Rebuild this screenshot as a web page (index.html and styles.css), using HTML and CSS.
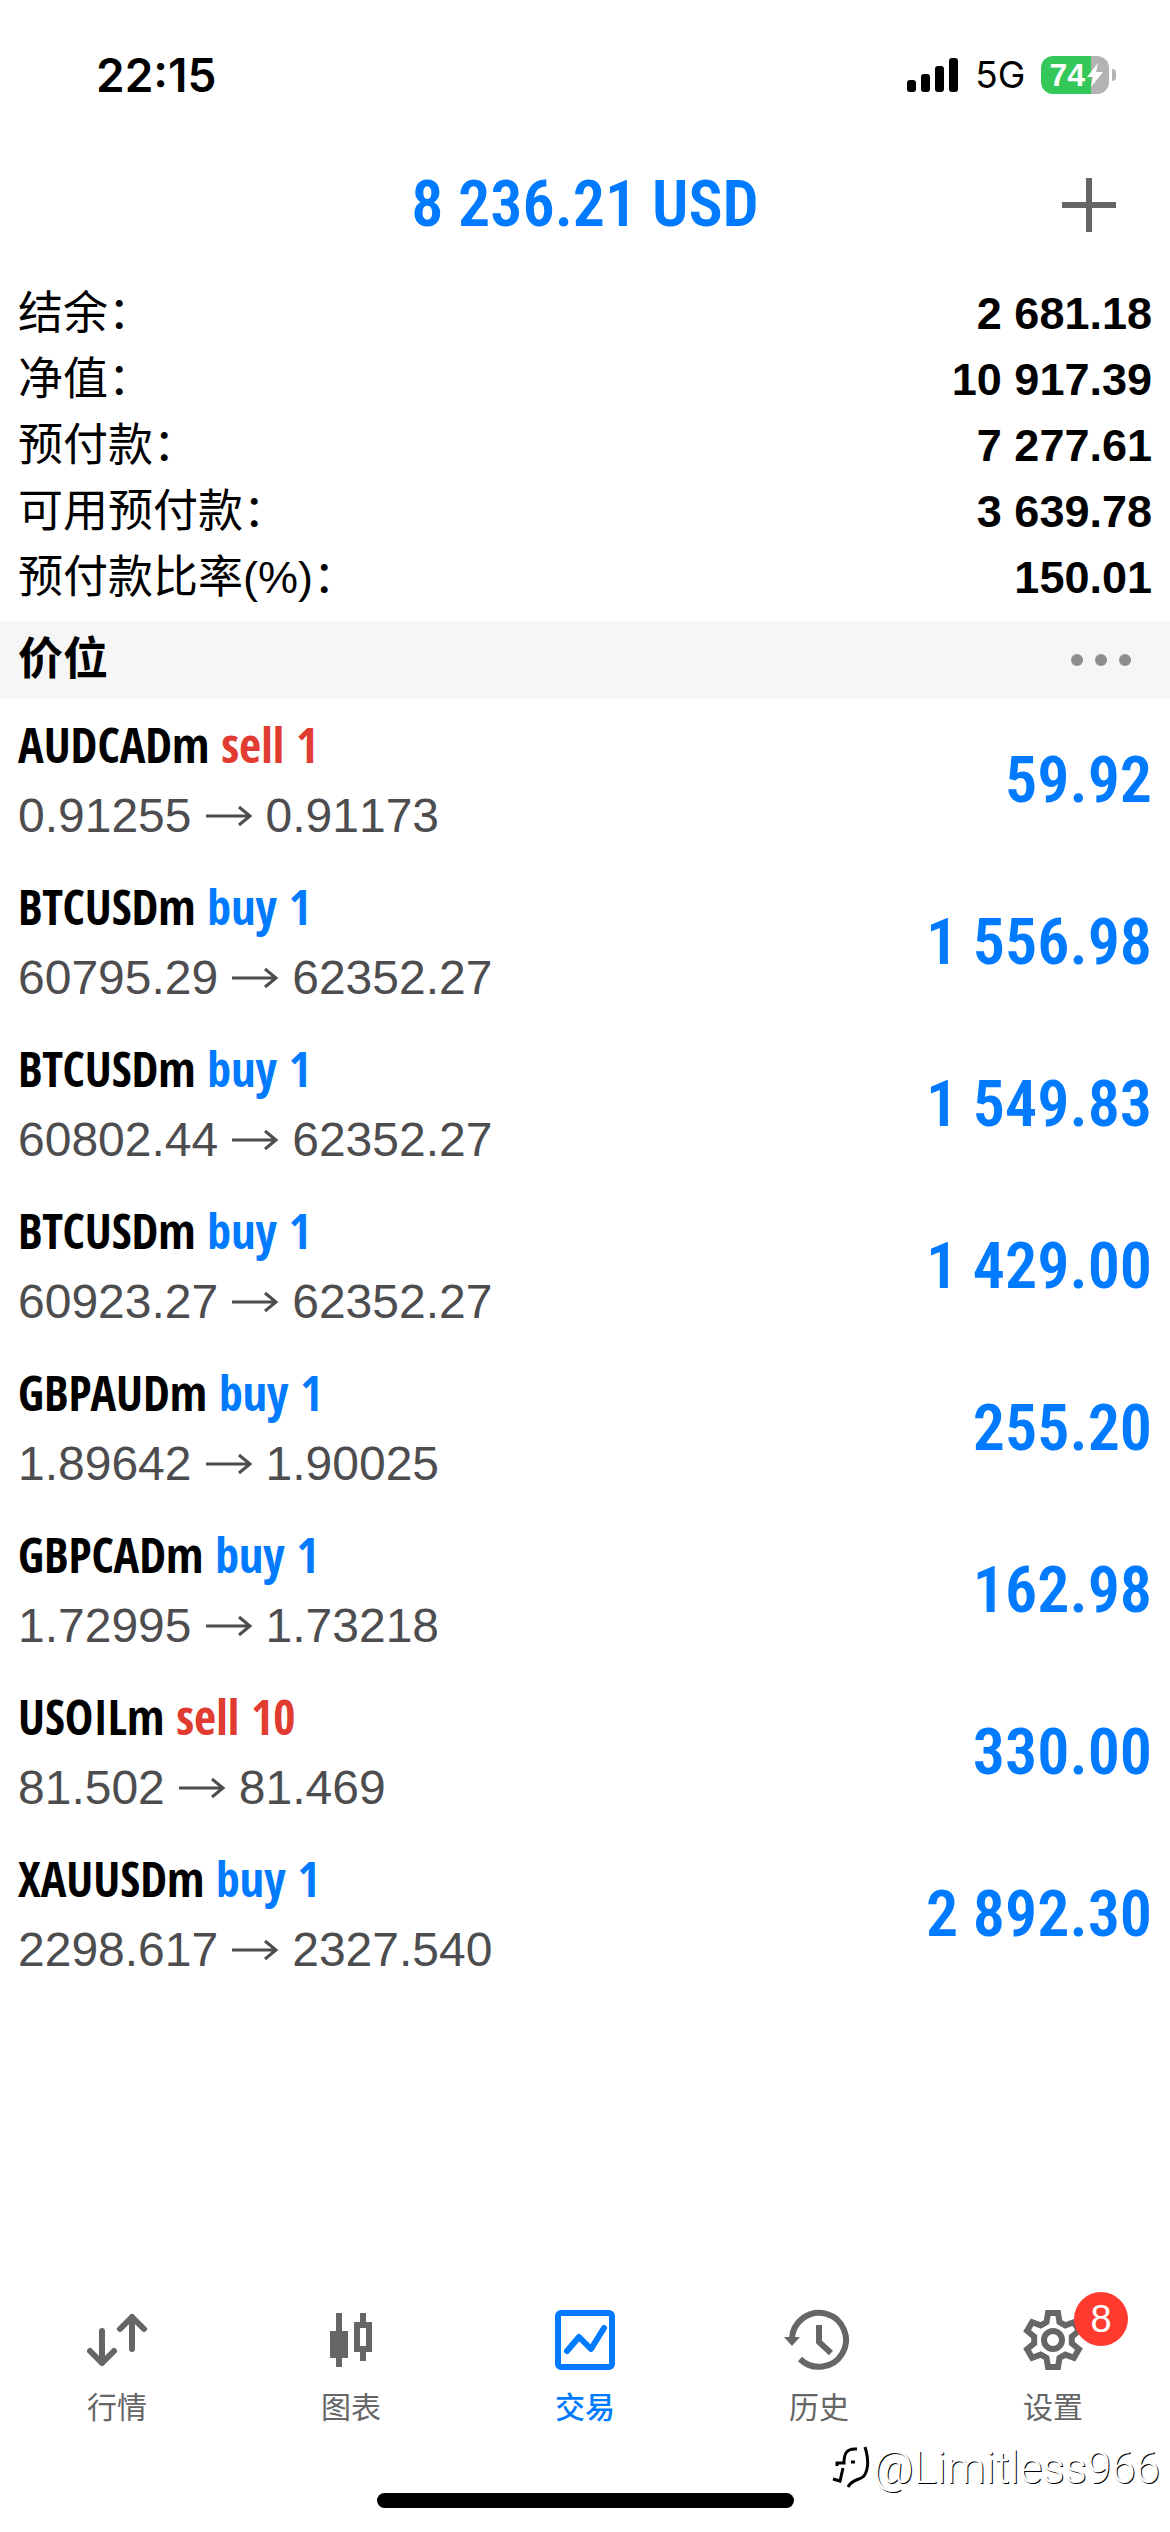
FILE: index.html
```html
<!DOCTYPE html>
<html lang="zh-CN">
<head>
<meta charset="utf-8">
<meta name="viewport" content="width=device-width">
<title>交易</title>
<link rel="stylesheet" href="styles.css">
</head>
<body>
<div class="page">
  <div class="status">
    <time class="clock">22:15</time>
    <div class="status-right">
      <svg class="signal" viewBox="0 0 52 34" aria-hidden="true"><rect x="0" y="22" width="9" height="12" rx="3"/><rect x="14" y="16" width="9" height="18" rx="3"/><rect x="28" y="8" width="9" height="26" rx="3"/><rect x="42" y="0" width="9" height="34" rx="3"/></svg>
      <span class="network">5G</span>
      <span class="battery"><span class="battery-body">74<svg class="bolt" viewBox="0 0 16 24" aria-hidden="true"><path d="M11 0 0 14h6L4 24 16 9H9z"/></svg></span><span class="battery-nub"></span></span>
    </div>
  </div>

  <header class="header">
    <h1 class="total">8 236.21 USD</h1>
    <button class="add" type="button" aria-label="新订单"><svg class="add-icon" viewBox="0 0 54 54"><path d="M27 0v54M0 27h54"/></svg></button>
  </header>

  <main class="main">
    <dl class="summary">
      <div class="summary-row"><dt>结余：</dt><dd>2 681.18</dd></div>
      <div class="summary-row"><dt>净值：</dt><dd>10 917.39</dd></div>
      <div class="summary-row"><dt>预付款：</dt><dd>7 277.61</dd></div>
      <div class="summary-row"><dt>可用预付款：</dt><dd>3 639.78</dd></div>
      <div class="summary-row"><dt>预付款比率(%)：</dt><dd>150.01</dd></div>
    </dl>

    <div class="section">
      <h2 class="section-title">价位</h2>
      <button class="more" type="button" aria-label="更多"><span class="dot"></span><span class="dot"></span><span class="dot"></span></button>
    </div>

    <ul class="positions">
      <li class="position"><div><div class="symbol">AUDCADm <span class="sell">sell 1</span></div><div class="prices">0.91255 <svg class="arrow" viewBox="0 0 48 34"><path d="M1 17h44M34 8l11 9-11 9"/></svg> 0.91173</div></div><div class="profit">59.92</div></li>
      <li class="position"><div><div class="symbol">BTCUSDm <span class="buy">buy 1</span></div><div class="prices">60795.29 <svg class="arrow" viewBox="0 0 48 34"><path d="M1 17h44M34 8l11 9-11 9"/></svg> 62352.27</div></div><div class="profit">1 556.98</div></li>
      <li class="position"><div><div class="symbol">BTCUSDm <span class="buy">buy 1</span></div><div class="prices">60802.44 <svg class="arrow" viewBox="0 0 48 34"><path d="M1 17h44M34 8l11 9-11 9"/></svg> 62352.27</div></div><div class="profit">1 549.83</div></li>
      <li class="position"><div><div class="symbol">BTCUSDm <span class="buy">buy 1</span></div><div class="prices">60923.27 <svg class="arrow" viewBox="0 0 48 34"><path d="M1 17h44M34 8l11 9-11 9"/></svg> 62352.27</div></div><div class="profit">1 429.00</div></li>
      <li class="position"><div><div class="symbol">GBPAUDm <span class="buy">buy 1</span></div><div class="prices">1.89642 <svg class="arrow" viewBox="0 0 48 34"><path d="M1 17h44M34 8l11 9-11 9"/></svg> 1.90025</div></div><div class="profit">255.20</div></li>
      <li class="position"><div><div class="symbol">GBPCADm <span class="buy">buy 1</span></div><div class="prices">1.72995 <svg class="arrow" viewBox="0 0 48 34"><path d="M1 17h44M34 8l11 9-11 9"/></svg> 1.73218</div></div><div class="profit">162.98</div></li>
      <li class="position"><div><div class="symbol">USOILm <span class="sell">sell 10</span></div><div class="prices">81.502 <svg class="arrow" viewBox="0 0 48 34"><path d="M1 17h44M34 8l11 9-11 9"/></svg> 81.469</div></div><div class="profit">330.00</div></li>
      <li class="position"><div><div class="symbol">XAUUSDm <span class="buy">buy 1</span></div><div class="prices">2298.617 <svg class="arrow" viewBox="0 0 48 34"><path d="M1 17h44M34 8l11 9-11 9"/></svg> 2327.540</div></div><div class="profit">2 892.30</div></li>
    </ul>
  </main>

  <nav class="tabs">
    <a class="tab" href="#quotes">
      <svg class="tab-icon round" viewBox="-36 -30 72 60"><path d="M-15-9v32M-27 11l12 12 12-12M15 9v-32M3-11l12-12 12 12"/></svg>
      行情
    </a>
    <a class="tab" href="#charts">
      <svg class="tab-icon" viewBox="-36 -30 72 60"><path d="M-12-27v54M12-27v12M12 9v12M6-15h12V9H6z"/><path class="solid" d="M-21-9h18v27h-18z"/></svg>
      图表
    </a>
    <a class="tab active" href="#trade" aria-current="page">
      <svg class="tab-icon round" viewBox="-36 -30 72 60"><rect x="-27" y="-27" width="54" height="54" rx="3"/><path d="M-18 11-6-3 6 9l13-21"/></svg>
      交易
    </a>
    <a class="tab" href="#history">
      <svg class="tab-icon" viewBox="-36 -30 72 60"><path d="M-27-1A27 27 0 1 1-19 19M0-15V2L12 13"/><path class="solid" d="M-35-3h16l-8 9z"/></svg>
      历史
    </a>
    <a class="tab" href="#settings">
      <span class="icon-box">
        <svg class="tab-icon" viewBox="-36 -30 72 60"><path d="M-6.5-18-5-27H5L6.500-18 12.300-14.600 20.900-17.800 25.900-9.200 18.800-3.400V3.400L25.900 9.200 20.900 17.800 12.300 14.600 6.500 18 5 27H-5L-6.500 18-12.300 14.600-20.900 17.800-25.900 9.200-18.800 3.400V-3.400L-25.900-9.200-20.900-17.800-12.300-14.600z"/><circle r="9"/></svg>
        <span class="badge">8</span>
      </span>
      设置
    </a>
  </nav>
  <div class="home-bar"></div>

  <div class="signature">
    <svg class="bird" viewBox="0 0 38 44" aria-hidden="true"><path d="M25 3C15 2 12 7 12 17H5v3M11 22 8 35l-7-2M19 16h4M33 1c4 13 3 23-1 29-5 5-11 2-16 11"/></svg>
    <span>@Limitless966</span>
  </div>
</div>
</body>
</html>
```
FILE: styles.css
```css
* { box-sizing: border-box; }

body {
  margin: 0;
  background: #fff;
  color: #000;
  font-family: "Liberation Sans", "Noto Sans CJK SC", sans-serif;
}

h1, h2, dl, dd, ul { margin: 0; padding: 0; }

button { border: 0; padding: 0; background: none; cursor: pointer; }

svg { display: block; fill: none; overflow: visible; }

.page {
  position: relative;
  display: flex;
  flex-direction: column;
  min-height: 100vh;
}

/* Status bar */
.status {
  display: flex;
  justify-content: space-between;
  align-items: center;
  padding: 46px 54px 26px 96px;
  line-height: 58px;
}

.clock { font-family: Inter, sans-serif; font-size: 46px; font-weight: 600; }

.status-right { display: flex; align-items: center; gap: 16px; }

.signal { width: 52px; height: 34px; fill: #000; }

.network { font-family: Inter, sans-serif; font-size: 37px; }

.battery { display: flex; align-items: center; gap: 3px; }

.battery-body {
  display: flex;
  align-items: center;
  gap: 2px;
  height: 38px;
  padding: 0 6px 0 8px;
  border-radius: 12px;
  background: linear-gradient(90deg, #34c759 74%, #b3b3b3 74%);
  color: #fff;
  font-size: 32px;
  font-weight: 700;
}

.bolt { width: 16px; height: 26px; fill: #fff; }

.battery-nub { width: 4px; height: 12px; border-radius: 0 4px 4px 0; background: #b3b3b3; }

/* Header */
.header {
  display: grid;
  grid-template-columns: 1fr auto 1fr;
  align-items: center;
  height: 150px;
  padding: 0 54px;
}

.total, .profit {
  color: #007aff;
  font-family: "Roboto Condensed", sans-serif;
  font-size: 64px;
  font-weight: 600;
  line-height: 80px;
}

.total { grid-column: 2; }

.add { justify-self: end; }

.add-icon { width: 54px; height: 54px; stroke: #666; stroke-width: 6; }

/* Account summary */
.main { flex: 1; }

.summary { padding: 1px 0 10px; font-size: 45px; line-height: 66px; }

.summary-row { display: flex; justify-content: space-between; padding: 0 18px; }

.summary-row dd { font-weight: 700; }

/* Positions */
.section {
  display: flex;
  justify-content: space-between;
  align-items: center;
  padding: 0 39px 0 18px;
  background: #f6f6f6;
}

.section-title { font-size: 45px; font-weight: 700; line-height: 78px; }

.more { display: flex; gap: 12px; }

.dot { width: 12px; height: 12px; border-radius: 50%; background: #8e8e8e; }

.positions { list-style: none; }

.position {
  display: flex;
  justify-content: space-between;
  align-items: center;
  padding: 16px 18px 15px;
}

.symbol {
  margin-bottom: 11px;
  font-family: "Open Sans Condensed", sans-serif;
  font-size: 48px;
  font-weight: 600;
  line-height: 60px;
}

.prices {
  display: flex;
  align-items: center;
  gap: 13px;
  font-size: 48px;
  font-kerning: none;
  line-height: 60px;
  color: #4d4d4f;
}

.arrow { width: 48px; height: 34px; stroke: currentColor; stroke-width: 3; }

.buy { color: #007aff; }

.sell { color: #e03c31; }

/* Tab bar */
.tabs { display: grid; grid-template-columns: repeat(5, 1fr); }

.tab {
  display: flex;
  flex-direction: column;
  align-items: center;
  gap: 18px;
  color: #666;
  font-size: 30px;
  line-height: 40px;
  text-decoration: none;
}

.tab.active { color: #007aff; font-weight: 500; }

.tab-icon { width: 72px; height: 60px; stroke: currentColor; stroke-width: 6; }

.round { stroke-linecap: round; stroke-linejoin: round; }

.solid { fill: currentColor; stroke: none; }

.icon-box { position: relative; }

.badge {
  position: absolute;
  top: -18px;
  left: 57px;
  width: 54px;
  height: 54px;
  border-radius: 50%;
  background: #ff3b30;
  color: #fff;
  font-size: 38px;
  line-height: 54px;
  text-align: center;
}

.home-bar {
  align-self: center;
  width: 36%;
  max-width: 417px;
  height: 15px;
  margin: 65px 0 24px;
  border-radius: 8px;
  background: #000;
}

.signature {
  position: absolute;
  right: 10px;
  bottom: 38px;
  display: flex;
  align-items: center;
  gap: 3px;
  color: #fff;
  font-family: Roboto, sans-serif;
  font-size: 44px;
  font-weight: 300;
  line-height: 52px;
  text-shadow: 1px 1px 0 #000;
}

.bird { width: 38px; height: 44px; stroke: #000; stroke-width: 3; }
```
